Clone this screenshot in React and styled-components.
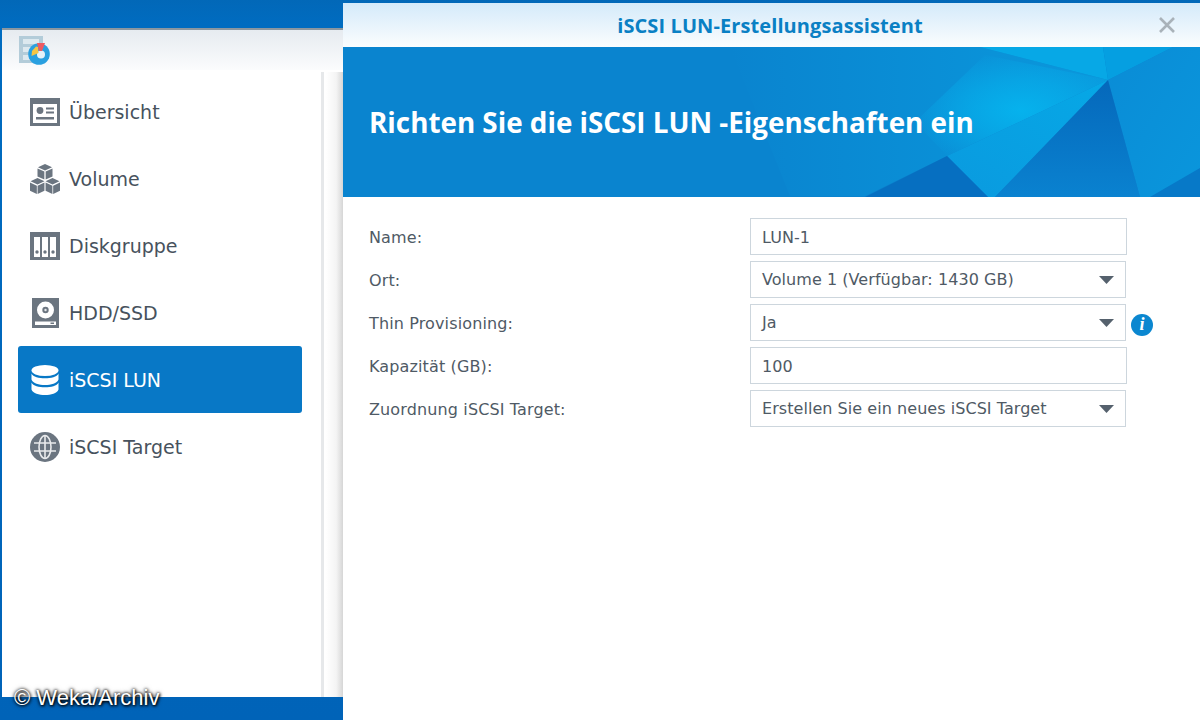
import React from "react";
import styled, { createGlobalStyle } from "styled-components";

const GlobalStyle = createGlobalStyle`
  html, body {
    margin: 0;
    padding: 0;
    width: 1200px;
    height: 720px;
    overflow: hidden;
    background: #0063b8;
  }
  #root {
    height: 720px;
  }
`;

const OverviewIcon = () => (
  <svg width="30" height="28" viewBox="0 0 30 28">
    <path fill="#6b7580" fillRule="evenodd" d="M0 0h30v28H0zM3 6v19h24V6z" />
    <circle cx="10" cy="12.5" r="3.400" fill="#6b7580" />
    <path fill="#6b7580" d="M16 9.500h8v2h-8zM16 13.500h8v2h-8zM6 19h18v2.500H6z" />
  </svg>
);

const VolumeIcon = () => (
  <svg width="32" height="32" viewBox="0 0 32 32">
    <path fill="#6b7580" d="M16 0l7.500 3.400-7.500 3.400-7.500-3.400zM8 4.800l7.300 3.300v8.400L8 13.200zM24 4.800l-7.300 3.300v8.400l7.300-3.300zM8 15l7.500 3.400L8 21.800.5 18.400zM0 19.800l7.300 3.300V32L0 28.400zM15.400 19.800l-7.300 3.300V32l7.300-3.600zM24 15l7.500 3.400-7.500 3.400-7.500-3.400zM16.600 19.800l7.300 3.300V32l-7.300-3.600zM32 19.800l-7.300 3.300V32l7.300-3.600z" />
  </svg>
);

const GroupIcon = () => (
  <svg width="30" height="28" viewBox="0 0 30 28">
    <path fill="#6b7580" fillRule="evenodd" d="M0 0h30v28H0zM4 5v20h6V5zM12 5v20h6V5zM20 5v20h6V5z" />
    <circle cx="7" cy="20" r="1.700" fill="#6b7580" />
    <circle cx="15" cy="20" r="1.700" fill="#6b7580" />
    <circle cx="23" cy="20" r="1.700" fill="#6b7580" />
  </svg>
);

const DiskIcon = () => (
  <svg width="27" height="30" viewBox="0 0 27 30">
    <path fill="#6b7580" fillRule="evenodd" d="M0 0h27v30H0zM13.500 3.500a8.500 8.500 0 1 0 0 17 8.500 8.500 0 0 0 0-17zM3 23.500v3.500h21v-3.500z" />
    <circle cx="13.500" cy="12" r="3.200" fill="#6b7580" />
    <circle cx="13.500" cy="12" r="1.200" fill="#e5e8ea" />
    <path fill="#6b7580" d="M18.500 24.500h3.500v1.500h-3.500z" />
  </svg>
);

const StackIcon = () => (
  <svg width="28" height="30" viewBox="0 0 28 30">
    <g fill="#fff">
      <ellipse cx="14" cy="5.500" rx="13.500" ry="5.500" />
      <path d="M.5 8.500C2 12 8 13.200 14 13.200S26 12 27.500 8.500v6C26 18.500 20 20 14 20S2 18.500.5 14.500z" />
      <path d="M.5 17.500C2 21 8 22.200 14 22.200S26 21 27.500 17.500v7C26 28.500 20 30 14 30S2 28.500.5 24.500z" />
    </g>
  </svg>
);

const GlobeIcon = () => (
  <svg width="30" height="30" viewBox="0 0 30 30">
    <circle cx="15" cy="15" r="15" fill="#6b7580" />
    <g fill="none" stroke="#fff" strokeWidth="1.600" opacity=".85">
      <ellipse cx="15" cy="15" rx="6" ry="11.500" />
      <path d="M15 3.500v23M4 11h22M4 19h22" />
    </g>
  </svg>
);

const AppIcon = () => (
  <svg width="32" height="30" viewBox="0 0 32 30">
    <path fill="#b3ccd9" d="M0 0h24v27H0z" />
    <path fill="#dde9ef" d="M4 3h16v5H4zM4 11h16v5H4zM4 19h16v5H4z" />
    <circle cx="20" cy="18" r="10.800" fill="#2aa0e0" />
    <circle cx="22" cy="18.500" r="4" fill="#e6f2f9" />
    <path fill="#f6c544" d="M12.500 20l.5-5 4-4.500 2 .5 .5 6z" />
    <path fill="#ee5a62" d="M18 7h8l-3 8h-3z" />
  </svg>
);

const CaretIcon = () => (
  <svg width="15" height="8" viewBox="0 0 15 8">
    <path fill="#55616d" d="M0 0h15l-7.500 8z" />
  </svg>
);

const navItems = [
  { label: "Übersicht", icon: <OverviewIcon /> },
  { label: "Volume", icon: <VolumeIcon /> },
  { label: "Diskgruppe", icon: <GroupIcon /> },
  { label: "HDD/SSD", icon: <DiskIcon /> },
  { label: "iSCSI LUN", icon: <StackIcon />, active: true },
  { label: "iSCSI Target", icon: <GlobeIcon /> },
];

const fields = [
  { label: "Name:", value: "LUN-1" },
  { label: "Ort:", value: "Volume 1 (Verfügbar: 1430 GB)", select: true },
  { label: "Thin Provisioning:", value: "Ja", select: true, info: true },
  { label: "Kapazität (GB):", value: "100" },
  { label: "Zuordnung iSCSI Target:", value: "Erstellen Sie ein neues iSCSI Target", select: true },
];

export default function App() {
  return (
    <>
      <GlobalStyle />
      <Desktop>
        <Sidebar>
          <SideHeader>
            <AppIcon />
          </SideHeader>
          <NavArea>
            <NavList>
              {navItems.map((item) => (
                <NavItem key={item.label} $active={item.active}>
                  <NavIcon>{item.icon}</NavIcon>
                  {item.label}
                </NavItem>
              ))}
            </NavList>
          </NavArea>
        </Sidebar>
        <Dialog>
          <TitleBar>
            iSCSI LUN-Erstellungsassistent
            <CloseButton>
              <svg width="16" height="16" viewBox="0 0 16 16">
                <path stroke="#a9b2b9" strokeWidth="2.600" d="M1 1l14 14M15 1L1 15" />
              </svg>
            </CloseButton>
          </TitleBar>
          <Banner>
            <BannerArt viewBox="343 47 857 150" preserveAspectRatio="none">
              <defs>
                <linearGradient id="upper" x1="0" y1="0" x2="1" y2="0">
                  <stop offset="0" stopColor="#0a84cf" />
                  <stop offset="1" stopColor="#0a98dc" />
                </linearGradient>
                <radialGradient id="glow" cx="0.55" cy="0.55" r="0.6">
                  <stop offset="0" stopColor="#06b2ed" />
                  <stop offset="0.5" stopColor="#06b2ed" stopOpacity="0.55" />
                  <stop offset="1" stopColor="#06b2ed" stopOpacity="0" />
                </radialGradient>
                <linearGradient id="wedge" x1="1" y1="0" x2="0" y2="1">
                  <stop offset="0" stopColor="#06a8e6" />
                  <stop offset="1" stopColor="#0a9adf" />
                </linearGradient>
                <linearGradient id="deep" x1="0" y1="0" x2="0" y2="1">
                  <stop offset="0" stopColor="#0568bb" />
                  <stop offset="1" stopColor="#0a82d0" />
                </linearGradient>
                <linearGradient id="side" x1="0" y1="0" x2="1" y2="1">
                  <stop offset="0" stopColor="#0a8cd6" />
                  <stop offset="1" stopColor="#0a96dc" />
                </linearGradient>
              </defs>
              <polygon points="730,47 980,47 1108,80 947,156 865,196 790,196" fill="url(#upper)" />
              <polygon points="1108,80 947,156 915,122 985,55" fill="url(#glow)" />
              <polygon points="980,47 1103,47 1108,80" fill="#07a8e6" />
              <polygon points="1103,47 1173,47 1108,80" fill="#059fe1" />
              <polygon points="1108,80 1173,47 1200,47 1200,197 1140,197" fill="url(#side)" />
              <polygon points="1150,197 1200,168 1200,197" fill="#0779c8" />
              <polygon points="1108,80 947,156 988,197 995,197" fill="url(#wedge)" />
              <polygon points="947,156 865,197 988,197" fill="#066fc1" />
              <polygon points="1108,80 995,197 1140,197" fill="url(#deep)" />
            </BannerArt>
            <BannerTitle>Richten Sie die iSCSI LUN -Eigenschaften ein</BannerTitle>
          </Banner>
          <Form>
            {fields.map((f) => (
              <Row key={f.label}>
                <Label>{f.label}</Label>
                <Field $select={f.select}>
                  {f.value}
                  {f.select && <CaretIcon />}
                </Field>
                {f.info && <InfoBadge>i</InfoBadge>}
              </Row>
            ))}
          </Form>
        </Dialog>
        <Watermark>© Weka/Archiv</Watermark>
      </Desktop>
    </>
  );
}

const Desktop = styled.div`
  position: relative;
  display: flex;
  align-items: flex-start;
  width: 1200px;
  height: 720px;
  overflow: hidden;
  background: linear-gradient(#0268b8 0, #006cc0 24px, #0063b8 100%);
  font-family: "DejaVu Sans", Verdana, sans-serif;
`;

const Sidebar = styled.aside`
  flex: none;
  box-sizing: border-box;
  width: 341px;
  height: 669px;
  margin: 28px 0 0 2px;
  border-top: 2px solid #8b97a0;
  background: #fff;
`;

const SideHeader = styled.div`
  box-sizing: border-box;
  height: 40px;
  padding: 6px 0 0 17px;
  background: linear-gradient(#e6ebf0, #fbfcfd);
`;

const NavArea = styled.div`
  box-sizing: border-box;
  height: 625px;
  margin-top: 2px;
  padding-right: 19px;
  background: linear-gradient(90deg, #fff 95%, #f4f4f4 98%, #d6d6d6 100%);
`;

const NavList = styled.nav`
  box-sizing: border-box;
  height: 100%;
  padding: 6px 0 0 16px;
  border-right: 3px solid #e6e8ea;
`;

const NavItem = styled.div`
  display: flex;
  align-items: center;
  box-sizing: border-box;
  width: 284px;
  height: 67px;
  padding-left: 12px;
  border-radius: 3px;
  font-size: 19px;
  color: ${(p) => (p.$active ? "#fff" : "#47525d")};
  background: ${(p) => (p.$active ? "#0878c6" : "transparent")};
`;

const NavIcon = styled.span`
  display: flex;
  flex: none;
  align-items: center;
  justify-content: center;
  width: 30px;
  margin-right: 9px;
`;

const Dialog = styled.main`
  flex: none;
  display: flex;
  flex-direction: column;
  width: 857px;
  height: 717px;
  background: #fff;
  margin-top: 3px;
`;

const TitleBar = styled.header`
  position: relative;
  display: flex;
  align-items: center;
  justify-content: center;
  box-sizing: border-box;
  height: 44px;
  padding-right: 3px;
  background: linear-gradient(#d4eafa, #fbfdfe);
  color: #0a80c4;
  font-family: "Open Sans", sans-serif;
  font-size: 20px;
  font-weight: 700;
  letter-spacing: 0.1px;
`;

const CloseButton = styled.span`
  position: absolute;
  right: 25px;
  top: 14px;
  display: flex;
`;

const Banner = styled.section`
  position: relative;
  display: flex;
  align-items: center;
  box-sizing: border-box;
  height: 150px;
  padding-left: 26px;
  background: #0a84cf;
  overflow: hidden;
`;

const BannerArt = styled.svg`
  position: absolute;
  inset: 0;
  width: 100%;
  height: 100%;
`;

const BannerTitle = styled.h1`
  position: relative;
  margin: 0;
  color: #fff;
  font-family: "Open Sans", sans-serif;
  font-size: 27.800px;
  font-weight: 700;
`;

const Form = styled.div`
  display: flex;
  flex-direction: column;
  gap: 6px;
  padding: 21px 0 0 26px;
`;

const Row = styled.div`
  display: flex;
  align-items: center;
  height: 37px;
`;

const Label = styled.span`
  flex: none;
  width: 381px;
  padding-top: 1px;
  font-size: 16px;
  letter-spacing: 0.13px;
  color: #4f5a65;
`;

const Field = styled.div`
  display: flex;
  align-items: center;
  justify-content: space-between;
  box-sizing: border-box;
  width: ${(p) => (p.$select ? "376px" : "377px")};
  height: 37px;
  padding: ${(p) => (p.$select ? "0 11px" : "2px 11px 0")};
  border: 1.500px solid #cdd6dd;
  font-size: 16px;
  letter-spacing: 0.05px;
  color: #4f5a65;
  background: #fff;
`;

const InfoBadge = styled.span`
  display: flex;
  align-items: center;
  justify-content: center;
  flex: none;
  width: 22px;
  height: 22px;
  margin: 4px 0 0 5px;
  border-radius: 50%;
  background: #0b87d0;
  color: #fff;
  font-family: "Liberation Serif", serif;
  font-size: 18px;
  font-style: italic;
  font-weight: 700;
`;

const Watermark = styled.div`
  position: absolute;
  left: 14px;
  top: 685px;
  color: #fff;
  font-family: "Liberation Sans", Arial, sans-serif;
  font-size: 22px;
  text-shadow: 0 0 3px #000, 1px 1px 3px #000, 0 0 5px rgba(0, 0, 0, 0.6);
`;
